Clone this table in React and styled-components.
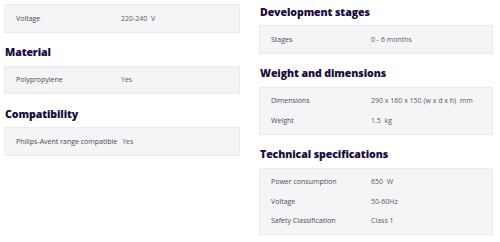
import styled, { createGlobalStyle } from 'styled-components';

const GlobalStyle = createGlobalStyle`
  html, body {
    margin: 0;
    padding: 0;
    background: #ffffff;
  }
  body {
    font-family: "Open Sans", "Liberation Sans", sans-serif;
  }
`;

const leftGroups = [
  { title: null, rows: [['Voltage', '220-240  V']] },
  { title: 'Material', rows: [['Polypropylene', 'Yes']] },
  { title: 'Compatibility', rows: [['Philips-Avent range compatible', 'Yes']] },
];

const rightGroups = [
  { title: 'Development stages', rows: [['Stages', '0 - 6 months']] },
  {
    title: 'Weight and dimensions',
    rows: [
      ['Dimensions', '290 x 160 x 150 (w x d x h)  mm'],
      ['Weight', '1.5  kg'],
    ],
  },
  {
    title: 'Technical specifications',
    rows: [
      ['Power consumption', '650  W'],
      ['Voltage', '50-60Hz'],
      ['Safety Classification', 'Class 1'],
    ],
  },
];

function SpecGroup({ title, rows, labelWidth }) {
  return (
    <Group>
      {title && <Heading>{title}</Heading>}
      <SpecBox>
        {rows.map(([label, value]) => (
          <Row key={label} labelWidth={labelWidth}>
            <Label>{label}</Label>
            <Value>{value}</Value>
          </Row>
        ))}
      </SpecBox>
    </Group>
  );
}

function App() {
  return (
    <>
      <GlobalStyle />
      <Page>
        <Column offset={4}>
          {leftGroups.map((g, i) => (
            <SpecGroup key={i} {...g} labelWidth={105} />
          ))}
        </Column>
        <Column offset={-2}>
          {rightGroups.map((g, i) => (
            <SpecGroup key={i} {...g} labelWidth={100} />
          ))}
        </Column>
      </Page>
    </>
  );
}

export default App;

const Page = styled.div`
  width: 500px;
  height: 242px;
  overflow: hidden;
  display: grid;
  grid-template-columns: 236px 234px;
  align-items: start;
  column-gap: 19px;
  padding-left: 4px;
  box-sizing: border-box;
`;

const Column = styled.div`
  display: flex;
  flex-direction: column;
  margin-top: ${props => props.offset}px;
  gap: 6px;
`;

const Group = styled.section`
  display: flex;
  flex-direction: column;
`;

const Heading = styled.h3`
  margin: 0;
  padding: 0 1px;
  height: 27px;
  display: flex;
  align-items: center;
  font-size: 10.6px;
  font-weight: 800;
  letter-spacing: -0.1px;
  color: #1a0a3e;
`;

const SpecBox = styled.div`
  background: #f5f5f7;
  border: 1px solid #ececef;
  padding: 3.5px 0;
`;

const Row = styled.div`
  display: grid;
  grid-template-columns: minmax(${props => props.labelWidth}px, max-content) 1fr;
  align-items: center;
  height: 19.5px;
  padding-left: 11px;
  font-size: 7px;
  white-space: pre;
`;

const Label = styled.span`
  padding-right: 5px;
  color: #4a4a55;
`;

const Value = styled.span`
  color: #5a5a64;
`;
